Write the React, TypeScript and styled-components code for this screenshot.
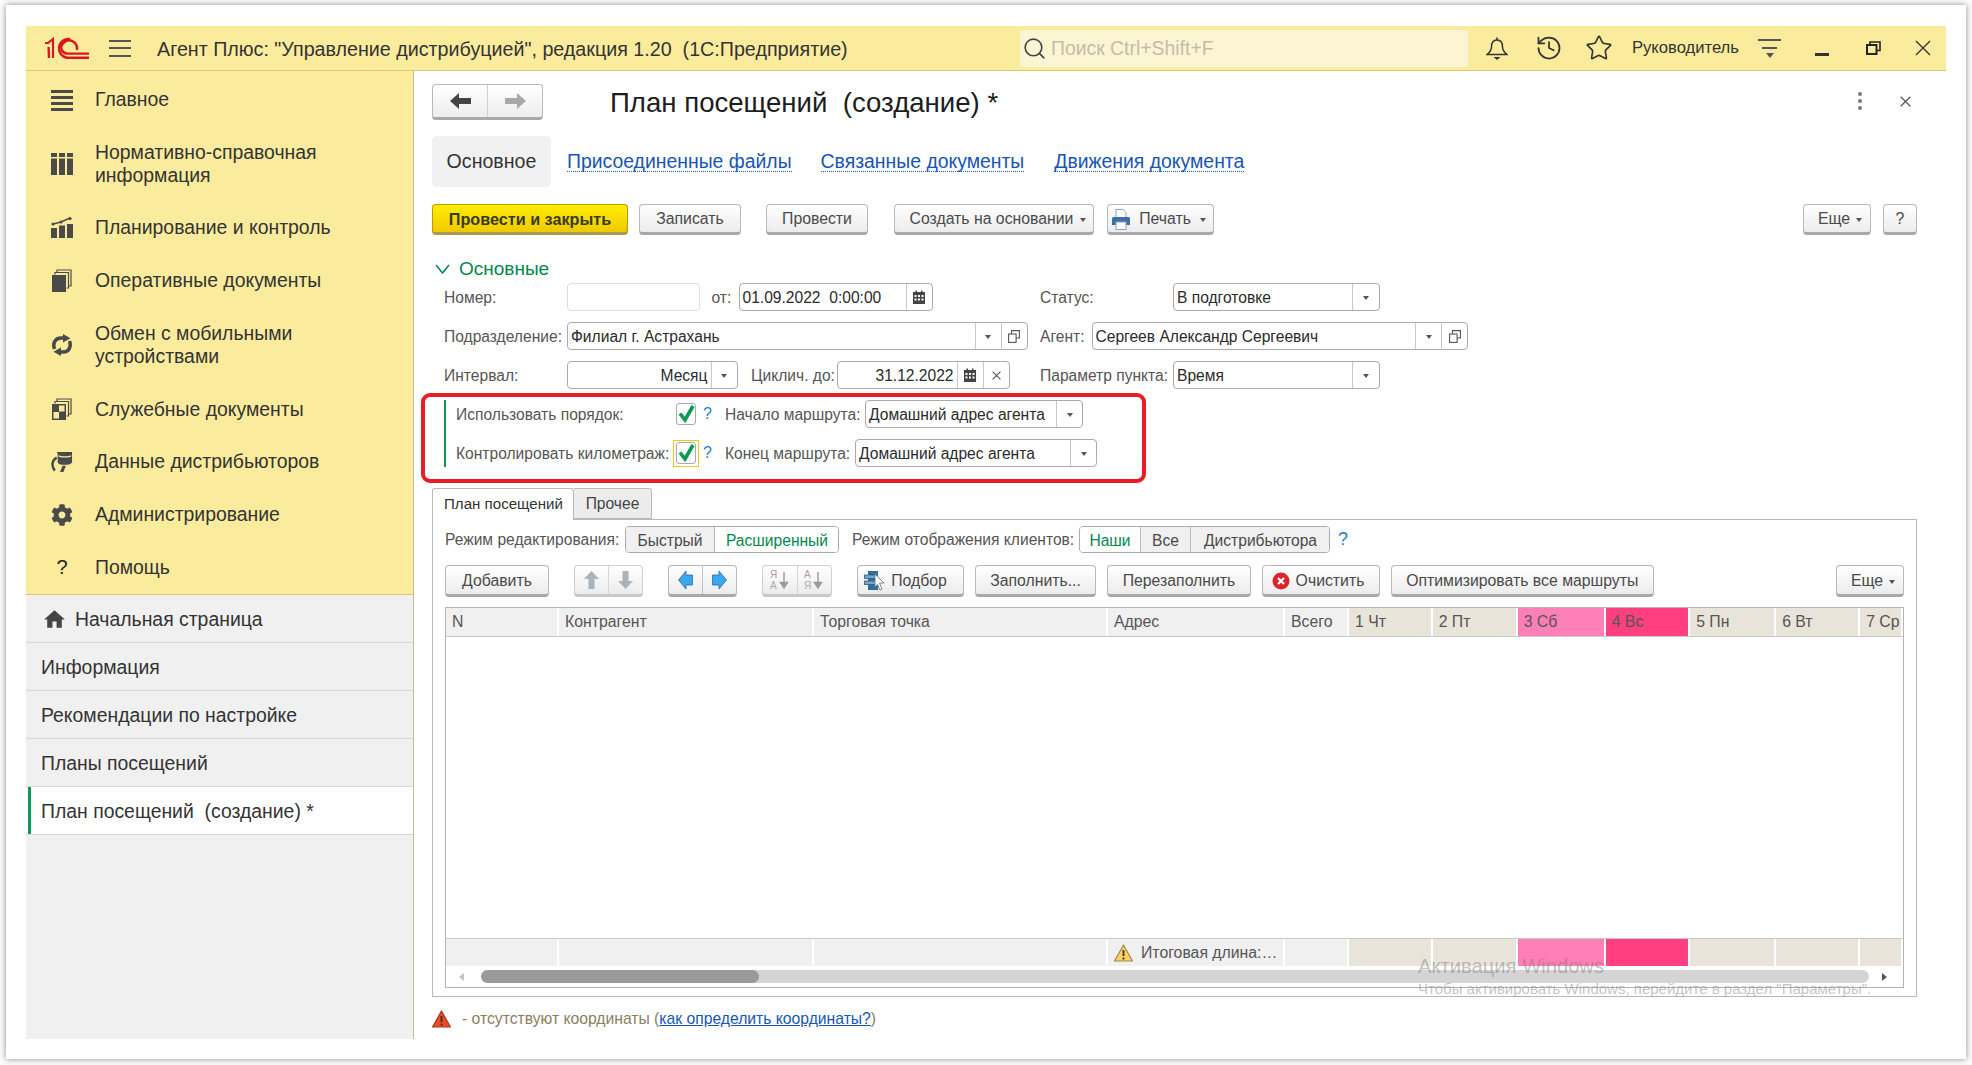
import React from "react";
import styled, { createGlobalStyle } from "styled-components";
import { History, Star, Search } from "lucide-react";
import { FaCog } from "react-icons/fa";
import { MdHome } from "react-icons/md";

const Global = createGlobalStyle`
  html, body { margin: 0; padding: 0; width: 1972px; height: 1065px; overflow: hidden; background: #fbfbfb; }
  body { font-family: "Liberation Sans", Arial, sans-serif; color: #333; }
  * { box-sizing: border-box; }
`;

const Frame = styled.div`
  position: relative; margin: 5px 0 0 6px; width: 1960px; height: 1054px; background: #fff;
  box-shadow: 0 0 6px rgba(0,0,0,.45); padding: 21px 20px 20px 20px;
`;
const AppBox = styled.div`display: flex; flex-direction: column; width: 1920px; height: 1013px;`;
const Header = styled.header`
  display: flex; align-items: center; height: 45px; flex: none; background: #fbec9d; border-bottom: 1px solid #d9c878; padding-left: 19px;
`;
const LogoBox = styled.div`width: 44px; height: 22px; flex: none; svg { display: block; }`;
const Burger = styled.div`
  margin-left: 20px; width: 22px; height: 17px; flex: none;
  display: flex; flex-direction: column; justify-content: space-between;
  span { display: block; height: 2px; background: #555; }
`;
const AppTitle = styled.div`margin-left: 26px; width: 863px; padding-top: 2px; flex: none; font-size: 19.7px; color: #333; white-space: pre;`;
const SearchBox = styled.div`
  width: 448px; height: 37px; flex: none; background: #fcf5d4; border-radius: 3px; display: flex; align-items: center; padding-left: 2px;
  color: #c2bda6; font-size: 19.4px; gap: 4px; svg { color: #444; flex: none; }
`;
const HeadIcon = styled.div<{ $ml: number }>`margin-left: ${p => p.$ml}px; display: flex; color: #333; flex: none;`;
const Role = styled.div`margin-left: 19px; width: 106px; flex: none; font-size: 16.6px; color: #333; white-space: nowrap;`;
const Funnel = styled.div`
  margin-left: 20px; width: 23px; height: 19px; flex: none; display: flex; flex-direction: column; align-items: center;
  i:nth-child(1) { width: 23px; height: 2px; background: #555; }
  i:nth-child(2) { width: 15px; height: 2px; background: #555; margin-top: 6px; }
  i:nth-child(3) { border: 4px solid transparent; border-top: 5px solid #555; border-bottom: 0; margin-top: 4px; }
`;
const Minimize = styled.div`margin-left: 34px; margin-top: 12px; width: 14px; height: 3px; background: #333; flex: none;`;

const Body = styled.div`display: flex; flex: 1; min-height: 0;`;
const Sidebar = styled.aside`
  width: 388px; flex: none; display: flex; flex-direction: column; background: #f0f0f0; border-right: 1px solid #c9bd8a;
`;
const MainMenu = styled.nav`background: #fbec9d; border-bottom: 1px solid #d9c878; height: 524px; padding-top: 2px; flex: none;`;
const MenuItem = styled.div<{ $h: number }>`
  display: flex; align-items: center; height: ${p => p.$h}px; padding-left: 25px; gap: 22px;
  font-size: 19.4px; line-height: 23px; color: #333;
`;
const MenuIcon = styled.div`width: 22px; height: 24px; flex: none; display: flex; align-items: center; justify-content: center; color: #4a4a4a; svg { display: block; }`;
const MenuText = styled.div<{ $wrap?: boolean }>`${p => (p.$wrap ? "width: 260px;" : "")}`;
const QMark = styled.span`font-size: 20px; color: #222;`;
const SectionItem = styled.div<{ $active?: boolean }>`
  display: flex; align-items: center; height: 48px; padding: 1px 0 0 15px; font-size: 19.4px; color: #333; white-space: pre;
  border-bottom: 1px solid #d8d8d8;
  background: ${p => (p.$active ? "#fff" : "#f0f0f0")};
  box-shadow: ${p => (p.$active ? "inset 2px 0 0 #fff, inset 5px 0 0 #0a9a55" : "none")};
  svg { color: #444; margin-right: 8px; margin-left: 1px; }
`;

const Main = styled.main`flex: 1; min-width: 0; padding: 13px 29px 0 18px; display: flex; flex-direction: column;`;
const TitleRow = styled.div`display: flex; align-items: center; height: 36px; flex: none;`;
const NavGroup = styled.div`
  display: flex; width: 111px; height: 36px; flex: none; border: 1px solid #b9b9b9; border-bottom: 3px solid #a9a9a9; border-radius: 4px;
  background: linear-gradient(#fff, #ededed);
`;
const NavBtn = styled.div<{ $first?: boolean }>`
  flex: 1; display: flex; align-items: center; justify-content: center; ${p => p.$first && "border-right: 1px solid #cfcfcf;"}
`;
const DocTitle = styled.h1`margin: 0 0 0 67px; padding-top: 2px; font-weight: 400; font-size: 27.6px; color: #1d1d1d; white-space: pre; flex: 1;`;
const Kebab = styled.div`
  display: flex; flex-direction: column; gap: 3px; margin-right: 38px; flex: none; margin-top: -2px;
  i { width: 4px; height: 4px; border-radius: 50%; background: #7a7a7a; }
`;
const TitleClose = styled.div`display: flex; margin-right: 6px; flex: none; margin-top: -2px;`;

const PageTabs = styled.div`display: flex; align-items: center; height: 51px; margin-top: 16px; flex: none;`;
const ActiveTab = styled.div`
  width: 119px; height: 51px; display: flex; align-items: center; justify-content: center; background: #f1f1f1; border-radius: 5px; font-size: 19.6px; color: #333; flex: none;
`;
const PageLink = styled.a<{ $ml: number }>`
  margin-left: ${p => p.$ml}px; font-size: 19.4px; color: #1655b5; border-bottom: 1px dotted #1655b5; line-height: 19px; padding-top: 1px; white-space: nowrap; flex: none;
`;

const ButtonBar = styled.div`display: flex; height: 31px; margin-top: 17px; flex: none;`;
const SubBar = styled.div`display: flex; height: 32px; margin-top: 12px; flex: none;`;
const Btn = styled.div<{ $w: number; $ml?: number; $auto?: boolean; $pr?: number; $pl?: number; $gap?: number }>`
  width: ${p => p.$w}px; margin-left: ${p => (p.$auto ? "auto" : `${p.$ml ?? 0}px`)}; flex: none;
  display: flex; align-items: center; justify-content: center; gap: ${p => p.$gap ?? 6}px;
  padding: 1px ${p => p.$pr ?? 0}px 0 ${p => p.$pl ?? 0}px;
  border: 1px solid #b9b9b9; border-bottom: 3px solid #a8a8a8; border-radius: 4px;
  background: linear-gradient(#ffffff, #ececec); font-size: 15.8px; color: #4a4a4a; white-space: nowrap;
`;
const PrimaryBtn = styled(Btn)`
  border-color: #b49c10; border-bottom-color: #a89a50; background: linear-gradient(#ffee00, #efc900); color: #3a3a20; font-weight: 700; font-size: 16.2px;
`;
const DualBtn = styled.div<{ $w: number; $ml?: number; $dim?: boolean }>`
  width: ${p => p.$w}px; margin-left: ${p => p.$ml ?? 0}px; flex: none; display: flex;
  border: 1px solid ${p => (p.$dim ? "#cfcfcf" : "#b9b9b9")}; border-bottom: 3px solid ${p => (p.$dim ? "#c8c8c8" : "#a8a8a8")}; border-radius: 4px;
  background: linear-gradient(#ffffff, #ececec);
  > div { flex: 1; display: flex; align-items: center; justify-content: center; }
  > div:first-child { border-right: 1px solid ${p => (p.$dim ? "#d6d6d6" : "#c4c4c4")}; }
`;
const Caret = styled.i`
  display: inline-block; border: 3px solid transparent; border-top: 4px solid #555; border-bottom: 0; flex: none; margin-top: 2px;
`;

const GroupHead = styled.div`
  display: flex; align-items: center; gap: 9px; height: 20px; margin: 24px 0 0 3px; color: #00894e; font-size: 19px; flex: none;
`;
const Form = styled.div`display: flex; flex-direction: column; gap: 11px; margin-top: 4px; padding-left: 12px; flex: none;`;
const FormRow = styled.div`display: flex; align-items: center; height: 28px;`;
const Label = styled.div<{ $w: number; $ml?: number }>`
  width: ${p => p.$w}px; margin-left: ${p => p.$ml ?? 0}px; padding-top: 1px; flex: none; font-size: 15.6px; color: #555; white-space: nowrap;
`;
const Field = styled.div<{ $w: number; $off?: boolean }>`
  width: ${p => p.$w}px; height: 28px; flex: none; display: flex; background: #fff;
  border: 1px solid ${p => (p.$off ? "#dcdcdc" : "#ababab")}; border-radius: 4px;
`;
const Value = styled.div<{ $right?: boolean }>`
  flex: 1; min-width: 0; padding: 1px 3px 0; display: flex; align-items: center; justify-content: ${p => (p.$right ? "flex-end" : "flex-start")};
  font-size: 15.6px; color: #2b2b2b; white-space: pre;
`;
const FieldBtn = styled.div<{ $w?: number }>`
  width: ${p => p.$w ?? 26}px; flex: none; border-left: 1px solid #c8c8c8; display: flex; align-items: center; justify-content: center; color: #555;
`;

const RedBox = styled.section`
  margin: 4px 0 0 -11px; width: 725px; height: 90px; border: 4px solid #ea1c24; border-radius: 9px; padding: 3px 0 0 19px; flex: none;
`;
const GreenBar = styled.div`
  border-left: 2px solid #10974f; height: 67px; padding-left: 10px; display: flex; flex-direction: column; justify-content: space-between;
`;
const CheckRow = styled.div`display: flex; align-items: center; height: 28px;`;
const CheckCell = styled.div<{ $focus?: boolean }>`
  width: 26px; height: 27px; flex: none; margin-left: -3px; display: flex; align-items: center; justify-content: center;
  border: 1px solid ${p => (p.$focus ? "#f2c81e" : "transparent")};
`;
const CheckBoxEl = styled.div`
  width: 20px; height: 22px; border: 1px solid #aaa; border-radius: 3px; position: relative; background: #fff;
  svg { position: absolute; left: 0; top: 0; }
`;
const RowHelp = styled.div`width: 26px; padding-left: 4px; flex: none; color: #1c7fd0; font-size: 16px;`;
const ModeHelp = styled.div`width: 26px; flex: none; color: #1c7fd0; font-size: 18px; text-align: center;`;

const InnerTabs = styled.div`display: flex; align-items: flex-end; height: 31px; margin-top: 5px; flex: none; position: relative; z-index: 1;`;
const InnerTabOn = styled.div`
  width: 142px; height: 32px; margin-bottom: -1px; padding: 0 0 2px 11px; background: #fff; border: 1px solid #b9b9b9; border-bottom: 0; border-radius: 3px 3px 0 0;
  display: flex; align-items: center; font-size: 15.1px; color: #333; white-space: nowrap; flex: none;
`;
const InnerTabOff = styled.div`
  width: 78px; height: 31px; background: #ececec; border: 1px solid #b9b9b9; border-left: 0; border-radius: 0 3px 0 0;
  display: flex; align-items: center; justify-content: center; font-size: 15.6px; color: #444; flex: none;
`;
const Panel = styled.section`
  width: 1485px; height: 478px; border: 1px solid #b9b9b9; padding: 6px 12px 0 12px; flex: none; display: flex; flex-direction: column;
`;
const ModeRow = styled.div`display: flex; align-items: center; height: 27px; flex: none;`;
const Segment = styled.div<{ $ml: number; $w: number }>`
  margin-left: ${p => p.$ml}px; width: ${p => p.$w}px; height: 27px; flex: none; display: flex; border: 1px solid #ababab; border-radius: 4px; overflow: hidden;
`;
const SegItem = styled.div<{ $w: number; $on?: boolean }>`
  width: ${p => p.$w}px; flex: none; display: flex; align-items: center; justify-content: center; padding-top: 2px; font-size: 15.6px; white-space: nowrap;
  color: ${p => (p.$on ? "#00894e" : "#4a4a4a")}; background: ${p => (p.$on ? "#fff" : "#f0f0f0")};
  & + & { border-left: 1px solid #bdbdbd; }
`;

const TableBox = styled.div`
  margin-top: 10px; height: 381px; flex: none; border: 1px solid #b4b4b4; display: flex; flex-direction: column; width: 1459px;
`;
const GridRow = styled.div<{ $h: number; $top?: boolean }>`
  display: grid; height: ${p => p.$h}px; flex: none;
  grid-template-columns: 113px 255px 294px 177px 64px 83.7px 85px 88px 84.5px 86px 84px 1fr;
  border-${p => (p.$top ? "top" : "bottom")}: 1px solid #c9c9c9;
`;
const Cell = styled.div<{ $bg?: string }>`
  background: ${p => p.$bg ?? "#f0f0f0"}; border-right: 2px solid #fff; padding-left: 6px; display: flex; align-items: center; gap: 8px;
  font-size: 15.8px; color: #555; white-space: nowrap; overflow: hidden; min-width: 0;
`;
const TableBody = styled.div`flex: 1;`;
const ScrollArea = styled.div`height: 21px; flex: none; display: flex; align-items: center; padding-left: 13px; gap: 16px;`;
const ScrollTrack = styled.div`width: 1388px; height: 13px; margin-left: 1px; background: #d4d4d4; border-radius: 7px; display: flex;`;
const ScrollThumb = styled.div`width: 278px; height: 13px; border-radius: 7px; background: #9a9a9a;`;
const ArrowL = styled.i`border: 4px solid transparent; border-right: 5px solid #c4c4c4; border-left: 0; flex: none;`;
const ArrowR = styled.i`border: 4px solid transparent; border-left: 5px solid #555; border-right: 0; margin-left: -3px; flex: none;`;

const Note = styled.div`display: flex; align-items: center; height: 20px; margin-top: 12px; font-size: 15.7px; color: #8a8060; flex: none; white-space: pre;`;
const NoteLink = styled.a`color: #1655b5; text-decoration: underline;`;
const NoteIcon = styled.div`width: 19px; height: 18px; margin-right: 11px; flex: none; svg { display: block; }`;

const Watermark = styled.div`
  position: absolute; left: 1412px; top: 949px; color: rgba(120,120,120,.45); pointer-events: none;
  div:first-child { font-size: 20.2px; line-height: 24px; }
  div:last-child { font-size: 15px; line-height: 18px; margin-top: 2px; white-space: nowrap; }
`;

const Logo = () => (
  <svg width="44" height="22" viewBox="0 0 44 22" fill="none" stroke="#d8161f" strokeWidth="2.1">
    <path d="M0 6 H3 L8 2 V21" />
    <path d="M3.6 10 L4 21" strokeWidth="2.4" />
    <path d="M25 2 A9.5 9.5 0 1 0 22 20.8 H44" strokeWidth="2.4" />
    <path d="M32 13 A8 8.5 0 0 0 18 6.4 A6 6 0 0 0 22 16.6 H44" strokeWidth="2.4" />
  </svg>
);

const BellIcon = () => (
  <svg width="22" height="23" viewBox="0 0 22 23" fill="none" stroke="#333" strokeWidth="1.5">
    <path d="M11 0.5 V3 M11 3 C6.5 3 5.5 6.5 5.5 10 C5.5 13 3.5 15.5 1 17.5 H21 C18.5 15.5 16.5 13 16.5 10 C16.5 6.5 15.5 3 11 3 Z" />
    <path d="M7.5 20 H14.5 L11 23 Z" fill="#333" stroke="none" />
  </svg>
);
const RestoreIcon = () => (
  <svg width="15" height="14" viewBox="0 0 15 14" fill="none" stroke="#222">
    <path d="M4 3.5 V1 H14 V9.5 H11" strokeWidth="1.6" />
    <rect x="1" y="4" width="9.5" height="9" strokeWidth="2" />
  </svg>
);
const CloseIcon = ({ s = 16, c = "#333", w = 1.4 }: { s?: number; c?: string; w?: number }) => (
  <svg width={s} height={s} viewBox="0 0 16 16" stroke={c} strokeWidth={w}>
    <path d="M1 1 L15 15 M15 1 L1 15" />
  </svg>
);

const IMain = () => (
  <svg width="22" height="22" viewBox="0 0 22 22" fill="#4a4a4a">
    <rect y="1" width="22" height="3" /><rect y="7" width="22" height="3" /><rect y="13" width="22" height="3" /><rect y="19" width="22" height="3" />
  </svg>
);
const IRef = () => (
  <svg width="22" height="22" viewBox="0 0 22 22" fill="#4a4a4a">
    <rect x="0" y="0" width="6" height="4" /><rect x="8" y="0" width="6" height="4" /><rect x="16" y="0" width="6" height="4" />
    <rect x="0" y="5.5" width="6" height="16.5" /><rect x="8" y="5.5" width="6" height="16.5" /><rect x="16" y="5.5" width="6" height="16.5" />
  </svg>
);
const IPlan = () => (
  <svg width="22" height="21" viewBox="0 0 22 21" fill="#4a4a4a">
    <rect x="0" y="11" width="6" height="10" /><rect x="8" y="8.5" width="6" height="12.5" /><rect x="16" y="7" width="6" height="14" />
    <path d="M2 7 L10 5 L19 1" stroke="#4a4a4a" strokeWidth="1.4" fill="none" />
    <circle cx="2" cy="7" r="1.6" /><circle cx="10" cy="5" r="1.6" /><circle cx="19" cy="1.6" r="1.6" />
  </svg>
);
const IDocs = () => (
  <svg width="20" height="23" viewBox="0 0 20 23" fill="none" stroke="#4a4a4a">
    <path d="M5 3 V1 H19 V17 H17" strokeWidth="1.2" />
    <path d="M3 5.5 V3.5 H16.5 V19 H14.5" strokeWidth="1.2" />
    <rect x="0" y="6" width="14" height="17" fill="#4a4a4a" stroke="none" />
  </svg>
);
const ISync = () => (
  <svg width="22" height="22" viewBox="0 0 22 22" fill="none" stroke="#4a4a4a" strokeWidth="3.6">
    <path d="M3.5 15 C1.5 9.5 4 4 10 4 H13" />
    <path d="M12 0 L19.5 4.2 L12 8.6 Z" fill="#4a4a4a" stroke="none" />
    <g transform="rotate(180 11 11)">
      <path d="M3.5 15 C1.5 9.5 4 4 10 4 H13" />
      <path d="M12 0 L19.5 4.2 L12 8.6 Z" fill="#4a4a4a" stroke="none" />
    </g>
  </svg>
);
const IService = () => (
  <svg width="20" height="22" viewBox="0 0 20 22" fill="none" stroke="#4a4a4a">
    <path d="M5 3 V1 H19 V16 H17" strokeWidth="1.2" />
    <path d="M3 5.5 V3.5 H16.5 V18 H14.5" strokeWidth="1.2" />
    <rect x="0" y="6" width="14" height="16" fill="#4a4a4a" stroke="none" />
    <rect x="7" y="7.5" width="5.5" height="6" fill="#fbec9d" stroke="none" />
    <rect x="1.5" y="14" width="5.5" height="6.5" fill="#fbec9d" stroke="none" />
  </svg>
);
const IData = () => (
  <svg width="23" height="22" viewBox="0 0 23 22" fill="none">
    <path d="M6 0.5 H22 V11 C22 13 18 14 14 14 C10 14 7 13 7 11 V3 Z" fill="#4a4a4a" />
    <path d="M8 4.5 C10 6 19 6 21 4.5" stroke="#fbec9d" strokeWidth="1.4" />
    <path d="M6 6.5 C1 9 0 15 4 20" stroke="#4a4a4a" strokeWidth="2.6" />
    <path d="M12 15 L15.5 15 L13 21.5 L9.5 21.5 Z" fill="#4a4a4a" />
  </svg>
);

const ArrowH = ({ c, flip }: { c: string; flip?: boolean }) => (
  <svg width="21" height="16" viewBox="0 0 21 16" fill={c} style={flip ? { transform: "scaleX(-1)" } : undefined}>
    <path d="M0 8 L9 0 V5 H21 V11 H9 V16 Z" />
  </svg>
);
const ArrowV = ({ flip }: { flip?: boolean }) => (
  <svg width="15" height="18" viewBox="0 0 15 18" fill="#a9b4ba" style={flip ? { transform: "scaleY(-1)" } : undefined}>
    <path d="M7.5 0 L15 8 H10.5 V18 H4.5 V8 H0 Z" />
  </svg>
);
const ArrowBlue = ({ flip }: { flip?: boolean }) => (
  <svg width="15" height="20" viewBox="0 0 15 20" style={flip ? { transform: "scaleX(-1)" } : undefined}>
    <path d="M0.5 10 L8 1 V5 H14.5 V15 H8 V19 Z" fill="#3ba7ee" stroke="#2a6da8" strokeWidth="0.8" />
  </svg>
);
const SortIcon = ({ a, b }: { a: string; b: string }) => (
  <svg width="20" height="22" viewBox="0 0 20 22">
    <text x="0" y="9" fontSize="10" fontFamily="Liberation Sans" fill="#b89a9a">{a}</text>
    <text x="0" y="20" fontSize="10" fontFamily="Liberation Sans" fill="#9fb0b8">{b}</text>
    <path d="M14 3 V17 M10.5 13.5 L14 19 L17.5 13.5 Z" stroke="#9a9a9a" strokeWidth="1.4" fill="#9a9a9a" />
  </svg>
);
const PrintIcon = () => (
  <svg width="18" height="21" viewBox="0 0 18 21">
    <path d="M4 0.5 H11 L14 3.5 V9 H4 Z" fill="#fff" stroke="#8ea2b2" />
    <path d="M1.5 8 H16.5 A1.5 1.5 0 0 1 18 9.5 V16 H0 V9.5 A1.5 1.5 0 0 1 1.5 8 Z" fill="#3d6f9f" />
    <rect x="4" y="13" width="10" height="7.5" fill="#fff" stroke="#8ea2b2" />
  </svg>
);
const PickIcon = () => (
  <svg width="21" height="22" viewBox="0 0 21 22">
    <rect x="4" y="1" width="10" height="19" fill="#2f6e9c" />
    <rect x="0.5" y="5" width="11" height="3.5" fill="#6fa7cf" stroke="#2f5e80" strokeWidth=".8" />
    <rect x="0.5" y="11" width="11" height="3.5" fill="#6fa7cf" stroke="#2f5e80" strokeWidth=".8" />
    <path d="M11 4 L20 13 L15.5 13 L18 19 L16 20 L13.4 14.5 L11 17 Z" fill="#fff" stroke="#777" strokeWidth=".9" />
  </svg>
);
const ClearIcon = () => (
  <svg width="18" height="18" viewBox="0 0 18 18">
    <circle cx="9" cy="9" r="8.5" fill="#d8262c" />
    <path d="M6 6 L12 12 M12 6 L6 12" stroke="#fff" strokeWidth="2.2" />
  </svg>
);
const Warn = ({ fill, s, c }: { fill: string; s: number; c: string }) => (
  <svg width={s} height={s - 1} viewBox="0 0 19 18">
    <path d="M9.5 1 L18.5 17 H0.5 Z" fill={fill} stroke={c} strokeWidth="1.2" strokeLinejoin="round" />
    <path d="M9.5 6 V12 M9.5 13.5 V15.5" stroke="#333" strokeWidth="1.8" />
  </svg>
);
const Calendar = () => (
  <svg width="12" height="14" viewBox="0 0 12 14" fill="#444">
    <path d="M0 2 H2.5 V0.5 H4 V2 H8 V0.5 H9.5 V2 H12 V14 H0 Z" />
    <g fill="#fff">
      <rect x="1.5" y="5" width="2" height="2" /><rect x="5" y="5" width="2" height="2" /><rect x="8.5" y="5" width="2" height="2" />
      <rect x="1.5" y="8.5" width="2" height="2" /><rect x="5" y="8.5" width="2" height="2" /><rect x="8.5" y="8.5" width="2" height="2" />
    </g>
  </svg>
);
const OpenIcon = () => (
  <svg width="12" height="13" viewBox="0 0 12 13" fill="none" stroke="#555" strokeWidth="1.1">
    <path d="M3.5 4 V0.6 H11.4 V8 H8" />
    <rect x="0.6" y="4" width="7.5" height="8.4" />
  </svg>
);
const Check = () => (
  <svg width="18" height="20" viewBox="0 0 18 20" fill="none" stroke="#0a9a50" strokeWidth="3.6">
    <path d="M3 9.5 L8 16 L16 2" />
  </svg>
);
const Chevron = () => (
  <svg width="15" height="10" viewBox="0 0 15 10" fill="none" stroke="#00894e" strokeWidth="1.5">
    <path d="M1 1 L7.5 9 L14 1" />
  </svg>
);

const menu: { t: string; icon: React.ReactNode; h: number; wrap?: boolean }[] = [
  { t: "Главное", icon: <IMain />, h: 53 },
  { t: "Нормативно-справочная информация", icon: <IRef />, h: 75, wrap: true },
  { t: "Планирование и контроль", icon: <IPlan />, h: 53 },
  { t: "Оперативные документы", icon: <IDocs />, h: 53 },
  { t: "Обмен с мобильными устройствами", icon: <ISync />, h: 76, wrap: true },
  { t: "Служебные документы", icon: <IService />, h: 52 },
  { t: "Данные дистрибьюторов", icon: <IData />, h: 53 },
  { t: "Администрирование", icon: <FaCog size={22} />, h: 53 },
  { t: "Помощь", icon: <QMark>?</QMark>, h: 53 },
];

const dayCols: [string, string][] = [
  ["1 Чт", "#e9e4d9"], ["2 Пт", "#e9e4d9"], ["3 Сб", "#ff7fb6"], ["4 Вс", "#ff3f80"],
  ["5 Пн", "#e9e4d9"], ["6 Вт", "#e9e4d9"], ["7 Ср", "#e9e4d9"],
];

export default function App() {
  return (
    <>
      <Global />
      <Frame>
        <AppBox>
          <Header>
            <LogoBox><Logo /></LogoBox>
            <Burger><span /><span /><span /></Burger>
            <AppTitle>{'Агент Плюс: "Управление дистрибуцией", редакция 1.20  (1С:Предприятие)'}</AppTitle>
            <SearchBox><Search size={25} strokeWidth={1.5} />Поиск Ctrl+Shift+F</SearchBox>
            <HeadIcon $ml={18}><BellIcon /></HeadIcon>
            <HeadIcon $ml={27}><History size={28} strokeWidth={1.5} /></HeadIcon>
            <HeadIcon $ml={22}><Star size={28} strokeWidth={1.4} /></HeadIcon>
            <Role>Руководитель</Role>
            <Funnel><i /><i /><i /></Funnel>
            <Minimize />
            <HeadIcon $ml={37}><RestoreIcon /></HeadIcon>
            <HeadIcon $ml={34}><CloseIcon /></HeadIcon>
          </Header>
          <Body>
            <Sidebar>
              <MainMenu>
                {menu.map(m => (
                  <MenuItem key={m.t} $h={m.h}>
                    <MenuIcon>{m.icon}</MenuIcon>
                    <MenuText $wrap={m.wrap}>{m.t}</MenuText>
                  </MenuItem>
                ))}
              </MainMenu>
              <SectionItem><MdHome size={25} />Начальная страница</SectionItem>
              <SectionItem>Информация</SectionItem>
              <SectionItem>Рекомендации по настройке</SectionItem>
              <SectionItem>Планы посещений</SectionItem>
              <SectionItem $active>{"План посещений  (создание) *"}</SectionItem>
            </Sidebar>
            <Main>
              <TitleRow>
                <NavGroup>
                  <NavBtn $first><ArrowH c="#444" /></NavBtn>
                  <NavBtn><ArrowH c="#a9a9a9" flip /></NavBtn>
                </NavGroup>
                <DocTitle>{"План посещений  (создание) *"}</DocTitle>
                <Kebab><i /><i /><i /></Kebab>
                <TitleClose><CloseIcon s={11} c="#555" w={1.8} /></TitleClose>
              </TitleRow>
              <PageTabs>
                <ActiveTab>Основное</ActiveTab>
                <PageLink $ml={16}>Присоединенные файлы</PageLink>
                <PageLink $ml={29}>Связанные документы</PageLink>
                <PageLink $ml={30}>Движения документа</PageLink>
              </PageTabs>
              <ButtonBar>
                <PrimaryBtn $w={196}>Провести и закрыть</PrimaryBtn>
                <Btn $w={102} $ml={11}>Записать</Btn>
                <Btn $w={102} $ml={25}>Провести</Btn>
                <Btn $w={200} $ml={26} $gap={7} $pl={8}>Создать на основании <Caret /></Btn>
                <Btn $w={107} $ml={13} $gap={9} $pr={3}><PrintIcon />Печать <Caret /></Btn>
                <Btn $w={68} $auto $pl={6}>Еще <Caret /></Btn>
                <Btn $w={34} $ml={12}>?</Btn>
              </ButtonBar>
              <GroupHead><Chevron />Основные</GroupHead>
              <Form>
                <FormRow>
                  <Label $w={123}>Номер:</Label>
                  <Field $w={132.5} $off />
                  <Label $w={27} $ml={12}>от:</Label>
                  <Field $w={194}>
                    <Value>{"01.09.2022  0:00:00"}</Value>
                    <FieldBtn><Calendar /></FieldBtn>
                  </Field>
                  <Label $w={133} $ml={107.5}>Статус:</Label>
                  <Field $w={207}>
                    <Value>В подготовке</Value>
                    <FieldBtn $w={27}><Caret /></FieldBtn>
                  </Field>
                </FormRow>
                <FormRow>
                  <Label $w={123}>Подразделение:</Label>
                  <Field $w={460.5}>
                    <Value>Филиал г. Астрахань</Value>
                    <FieldBtn><Caret /></FieldBtn>
                    <FieldBtn><OpenIcon /></FieldBtn>
                  </Field>
                  <Label $w={51.5} $ml={12.5}>Агент:</Label>
                  <Field $w={376.5}>
                    <Value>Сергеев Александр Сергеевич</Value>
                    <FieldBtn><Caret /></FieldBtn>
                    <FieldBtn><OpenIcon /></FieldBtn>
                  </Field>
                </FormRow>
                <FormRow>
                  <Label $w={123}>Интервал:</Label>
                  <Field $w={170.5}>
                    <Value $right>Месяц</Value>
                    <FieldBtn><Caret /></FieldBtn>
                  </Field>
                  <Label $w={86} $ml={13.5}>Циклич. до:</Label>
                  <Field $w={172.5}>
                    <Value $right>31.12.2022</Value>
                    <FieldBtn><Calendar /></FieldBtn>
                    <FieldBtn><CloseIcon s={9} c="#555" w={2} /></FieldBtn>
                  </Field>
                  <Label $w={133} $ml={30.5}>Параметр пункта:</Label>
                  <Field $w={207}>
                    <Value>Время</Value>
                    <FieldBtn $w={27}><Caret /></FieldBtn>
                  </Field>
                </FormRow>
              </Form>
              <RedBox>
                <GreenBar>
                  <CheckRow>
                    <Label $w={220}>Использовать порядок:</Label>
                    <CheckCell><CheckBoxEl><Check /></CheckBoxEl></CheckCell>
                    <RowHelp>?</RowHelp>
                    <Label $w={140}>Начало маршрута:</Label>
                    <Field $w={218}>
                      <Value>Домашний адрес агента</Value>
                      <FieldBtn><Caret /></FieldBtn>
                    </Field>
                  </CheckRow>
                  <CheckRow>
                    <Label $w={220}>Контролировать километраж:</Label>
                    <CheckCell $focus><CheckBoxEl><Check /></CheckBoxEl></CheckCell>
                    <RowHelp>?</RowHelp>
                    <Label $w={130}>Конец маршрута:</Label>
                    <Field $w={242}>
                      <Value>Домашний адрес агента</Value>
                      <FieldBtn><Caret /></FieldBtn>
                    </Field>
                  </CheckRow>
                </GreenBar>
              </RedBox>
              <InnerTabs>
                <InnerTabOn>План посещений</InnerTabOn>
                <InnerTabOff>Прочее</InnerTabOff>
              </InnerTabs>
              <Panel>
                <ModeRow>
                  <Label $w={180}>Режим редактирования:</Label>
                  <Segment $ml={0} $w={214}>
                    <SegItem $w={88}>Быстрый</SegItem>
                    <SegItem $w={125} $on>Расширенный</SegItem>
                  </Segment>
                  <Label $w={227} $ml={13}>Режим отображения клиентов:</Label>
                  <Segment $ml={0} $w={251}>
                    <SegItem $w={60} $on>Наши</SegItem>
                    <SegItem $w={50}>Все</SegItem>
                    <SegItem $w={140}>Дистрибьютора</SegItem>
                  </Segment>
                  <ModeHelp>?</ModeHelp>
                </ModeRow>
                <SubBar>
                  <Btn $w={104}>Добавить</Btn>
                  <DualBtn $w={69} $ml={25} $dim><div><ArrowV /></div><div><ArrowV flip /></div></DualBtn>
                  <DualBtn $w={69} $ml={25}><div><ArrowBlue /></div><div><ArrowBlue flip /></div></DualBtn>
                  <DualBtn $w={70} $ml={25} $dim><div><SortIcon a="Я" b="А" /></div><div><SortIcon a="А" b="Я" /></div></DualBtn>
                  <Btn $w={107} $ml={25} $pr={10}><PickIcon />Подбор</Btn>
                  <Btn $w={121} $ml={11}>Заполнить...</Btn>
                  <Btn $w={144} $ml={11}>Перезаполнить</Btn>
                  <Btn $w={118} $ml={11} $pr={6}><ClearIcon />Очистить</Btn>
                  <Btn $w={262.5} $ml={11}>Оптимизировать все маршруты</Btn>
                  <Btn $w={68} $auto $pl={6}>Еще <Caret /></Btn>
                </SubBar>
                <TableBox>
                  <GridRow $h={29}>
                    <Cell>N</Cell>
                    <Cell>Контрагент</Cell>
                    <Cell>Торговая точка</Cell>
                    <Cell>Адрес</Cell>
                    <Cell>Всего</Cell>
                    {dayCols.map(([t, bg]) => <Cell key={t} $bg={bg}>{t}</Cell>)}
                  </GridRow>
                  <TableBody />
                  <GridRow $h={28} $top>
                    <Cell /><Cell /><Cell />
                    <Cell><Warn fill="#ffcf60" s={19} c="#9a8a50" />Итоговая длина:…</Cell>
                    <Cell />
                    {dayCols.map(([t, bg]) => <Cell key={t} $bg={bg} />)}
                  </GridRow>
                  <ScrollArea>
                    <ArrowL />
                    <ScrollTrack><ScrollThumb /></ScrollTrack>
                    <ArrowR />
                  </ScrollArea>
                </TableBox>
              </Panel>
              <Note>
                <NoteIcon><Warn fill="#f04a24" s={19} c="#a03a20" /></NoteIcon>
                {"- отсутствуют координаты ("}<NoteLink>как определить координаты?</NoteLink>{")"}
              </Note>
            </Main>
          </Body>
        </AppBox>
        <Watermark>
          <div>Активация Windows</div>
          <div>Чтобы активировать Windows, перейдите в раздел "Параметры".</div>
        </Watermark>
      </Frame>
    </>
  );
}
